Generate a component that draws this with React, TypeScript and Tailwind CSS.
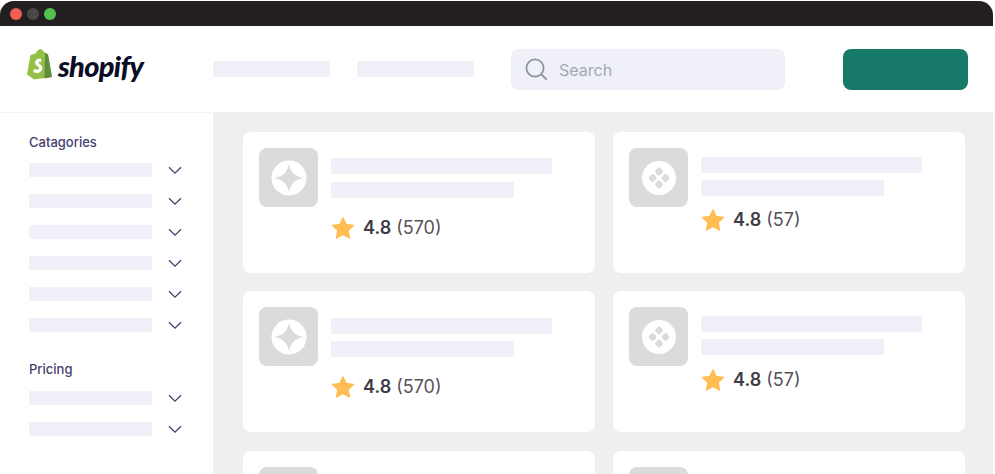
const SIDE_ROWS = [0, 1, 2, 3, 4, 5];
const PRICE_ROWS = [0, 1];

function Chevron() {
  return (
    <svg width="14" height="9" viewBox="0 0 14 9" fill="none" className="ml-[16px]">
      <path d="M1 1.2 7 7.2 13 1.2" stroke="#45406e" strokeWidth="1.3" />
    </svg>
  );
}

function SideRow() {
  return (
    <div className="flex h-[14px] items-center">
      <div className="h-[14px] w-[123px] bg-[#f0f0f9]" />
      <Chevron />
    </div>
  );
}

function Star() {
  return (
    <svg width="24" height="24" viewBox="0 0 24 24" className="shrink-0">
      <path
        d="M12 2 15 8.6 22.4 9.5 17 14.5 18.4 21.8 12 18.2 5.6 21.8 7 14.5 1.6 9.5 9 8.6Z"
        fill="#ffbe55"
        stroke="#ffbe55"
        strokeWidth="1.6"
        strokeLinejoin="round"
      />
    </svg>
  );
}

function SparkIcon() {
  return (
    <svg width="36" height="36" viewBox="0 0 36 36">
      <circle cx="18" cy="18" r="17.5" fill="#fff" />
      <path d="M18 3.5C19.5 12 24 16.5 32.5 18 24 19.5 19.5 24 18 32.5 16.5 24 12 19.5 3.5 18 12 16.5 16.5 12 18 3.5Z" fill="#dbdbdb" />
    </svg>
  );
}

function DotsIcon() {
  return (
    <svg width="34" height="34" viewBox="0 0 34 34" fill="#dbdbdb">
      <circle cx="17" cy="17" r="17" fill="#fff" />
      <rect x="13.6" y="7.1" width="6.8" height="6.8" rx="2.4" transform="rotate(45 17 10.5)" />
      <rect x="13.6" y="20.1" width="6.8" height="6.8" rx="2.4" transform="rotate(45 17 23.5)" />
      <rect x="7.1" y="13.6" width="6.8" height="6.8" rx="2.4" transform="rotate(45 10.5 17)" />
      <rect x="20.1" y="13.6" width="6.8" height="6.8" rx="2.4" transform="rotate(45 23.5 17)" />
    </svg>
  );
}

type CardProps = {
  count?: string;
  kind: "spark" | "dots";
  barTop: string;
  barGap: string;
  rateTop?: string;
};

function Card({ count, kind, barTop, barGap, rateTop }: CardProps) {
  return (
    <div className="flex h-[141px] w-[352px] shrink-0 gap-[13px] rounded-[8px] bg-white pl-[16px] pt-[16px]">
      <div className="flex h-[59px] w-[59px] shrink-0 items-center justify-center rounded-[8px] bg-[#dbdbdb]">
        {kind === "spark" ? <SparkIcon /> : <DotsIcon />}
      </div>
      <div className={barTop}>
        <div className="h-[16px] w-[221px] bg-[#f0f0f8]" />
        <div className={barGap} />
        {count ? (
          <div className={rateTop}>
            <Star />
            <span className="ml-[8px] text-[18px] font-semibold text-[#403b44]">4.8</span>
            <span className="ml-[5px] text-[18px] text-[#57525a]">({count})</span>
          </div>
        ) : null}
      </div>
    </div>
  );
}

export default function App() {
  return (
    <div className="h-[474px] w-[995px] overflow-hidden bg-white font-['Inter',sans-serif]">
      <div className="mt-px w-[993px]">
        <div className="flex h-[25px] items-center gap-[5px] rounded-t-[14px] bg-[#231f20] pl-[10px]">
          <span className="h-[12px] w-[12px] rounded-full bg-[#ee5f57]" />
          <span className="h-[12px] w-[12px] rounded-full bg-[#4a4748]" />
          <span className="h-[12px] w-[12px] rounded-full bg-[#52c04e]" />
        </div>

        <header className="flex h-[87px] items-center border-b border-[#f3f3f3] bg-white">
          <div className="ml-[26px] mb-[10px] flex w-[187px] items-center">
            <svg width="26" height="32" viewBox="0 0 26 31" className="shrink-0">
              <path d="M1 26 4.5 6.5 10 4.8C11 1.6 13.5 0.4 15.5 0.8L19 4.2 22 6 26 28.5 8 31Z" fill="#95bf47" />
              <path d="M19 4.2 22 6 26 28.5 18.5 30Z" fill="#5e8e3e" />
              <path d="M15.5 10.5C11.5 9.5 8.7 12 9 14.6 9.3 17.5 13.2 17.6 13 19.9 12.8 21.3 10.6 21.6 8 20.2L7.2 23.6C11 25.4 15.8 24.4 16.3 20 16.7 16.4 12.7 15.8 12.8 14.2 12.8 13.3 14 12.9 15 13.4Z" fill="#fff" />
              <path d="M10.5 5C11.4 2.4 13 1.4 14.5 1.6M13 4.2C13.6 2.8 14.6 2 15.6 2" stroke="#95bf47" strokeWidth="1" fill="none" />
            </svg>
            <span className="ml-[6px] mt-[3px] font-['Lato',sans-serif] text-[29px] leading-none font-black tracking-[-0.7px] text-[#0b0d26] italic">
              shopify
            </span>
          </div>
          <div className="h-[16px] w-[117px] bg-[#f0f0f8]" />
          <div className="ml-[27px] h-[16px] w-[117px] bg-[#f0f0f8]" />
          <div className="ml-[37px] flex h-[41px] w-[274px] items-center rounded-[8px] bg-[#eff0f8] pl-[14px]">
            <svg width="22" height="22" viewBox="0 0 22 22" fill="none" stroke="#8f94a3" strokeWidth="1.8" strokeLinecap="round">
              <circle cx="10" cy="10" r="8.6" />
              <path d="M16.5 16.5 21 21" />
            </svg>
            <span className="ml-[12px] mt-px text-[16px] text-[#a3a7b4]">Search</span>
          </div>
          <div className="ml-[58px] h-[41px] w-[125px] rounded-[8px] bg-[#177a68]" />
        </header>

        <div className="flex h-[361px]">
          <aside className="w-[213px] shrink-0 bg-white pl-[29px] pt-[21px]">
            <h3 className="text-[13px] leading-[16px] font-medium text-[#45406e]">Catagories</h3>
            <div className="mt-[13px] flex flex-col gap-[17px]">
              {SIDE_ROWS.map((r) => (
                <SideRow key={r} />
              ))}
            </div>
            <h3 className="mt-[29px] text-[13px] leading-[16px] font-medium text-[#45406e]">Pricing</h3>
            <div className="mt-[14px] flex flex-col gap-[17px]">
              {PRICE_ROWS.map((r) => (
                <SideRow key={r} />
              ))}
            </div>
          </aside>

          <main className="flex flex-1 gap-[18px] bg-[#efefef] pl-[30px]">
            <div className="flex flex-col gap-[18px] pt-[19px]">
              <Card count="570" kind="spark" barTop="pt-[10px]" barGap="mb-[16px] mt-[8px] h-[16px] w-[183px] bg-[#f0f0f8]" rateTop="flex items-center" />
              <Card count="570" kind="spark" barTop="pt-[11px]" barGap="mb-[16px] mt-[7px] h-[16px] w-[183px] bg-[#f0f0f8]" rateTop="flex items-center" />
              <div className="mt-px">
                <Card kind="spark" barTop="pt-[11px]" barGap="mt-[7px] h-[16px] w-[183px] bg-[#f0f0f8]" />
              </div>
            </div>
            <div className="flex flex-col gap-[18px] pt-[19px]">
              <Card count="57" kind="dots" barTop="pt-[9px]" barGap="mb-[10px] mt-[7px] h-[16px] w-[183px] bg-[#f0f0f8]" rateTop="flex items-center" />
              <Card count="57" kind="dots" barTop="pt-[9px]" barGap="mb-[11px] mt-[7px] h-[16px] w-[183px] bg-[#f0f0f8]" rateTop="flex items-center" />
              <div className="mt-px">
                <Card kind="dots" barTop="pt-[9px]" barGap="mt-[7px] h-[16px] w-[183px] bg-[#f0f0f8]" />
              </div>
            </div>
          </main>
        </div>
      </div>
    </div>
  );
}
